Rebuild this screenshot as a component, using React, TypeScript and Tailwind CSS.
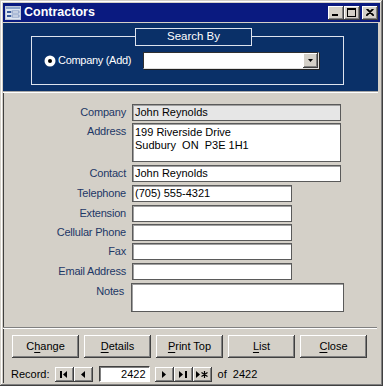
import React from "react";

const raised =
  "bg-[#d4d0c8] shadow-[inset_-1px_-1px_#404040,inset_1px_1px_#ffffff,inset_-2px_-2px_#808080,inset_2px_2px_#d4d0c8]";

function Field({
  label,
  w,
  h = 17,
  mt,
  value,
  grey,
  labelW = 123,
  gap = 6,
}: {
  label: string;
  w: number;
  h?: number;
  mt: number;
  value?: React.ReactNode;
  grey?: boolean;
  labelW?: number;
  gap?: number;
}) {
  return (
    <div className="flex items-start" style={{ marginTop: mt }}>
      <div
        className="text-right text-[11px] leading-[17px] text-[#1d3766] shrink-0 tracking-[-0.2px]"
        style={{ width: labelW, marginRight: gap }}
      >
        {label}
      </div>
      <div
        className={`border border-[#5a5a5a] shadow-[inset_1px_1px_#a0a0a0] text-[11px] leading-[13px] text-black pl-[2px] pt-[1px] ${
          grey ? "bg-[#e6e6e6]" : "bg-white"
        }`}
        style={{ width: w, height: h }}
      >
        {value}
      </div>
    </div>
  );
}

function NavBtn({ children }: { children: React.ReactNode }) {
  return (
    <div className={`${raised} w-[19px] h-[15px] flex items-center justify-center`}>
      {children}
    </div>
  );
}

function Btn({ pre, u, post }: { pre: string; u: string; post: string }) {
  return (
    <div
      className={`${raised} w-[67px] h-[23px] flex items-center justify-center text-[11px] text-black`}
    >
      <span>
        {pre}
        <span className="underline underline-offset-2">{u}</span>
        {post}
      </span>
    </div>
  );
}

export default function App() {
  return (
    <div
      className="w-[383px] h-[386px] bg-[#d4d0c8] p-[3px] shadow-[inset_-1px_-1px_#404040,inset_1px_1px_#d4d0c8,inset_-2px_-2px_#808080,inset_2px_2px_#ffffff] flex flex-col"
      style={{ fontFamily: '"Liberation Sans", Arial, sans-serif' }}
    >
      {/* Title bar */}
      <div className="h-[19px] bg-[#0a1a80] flex items-center pl-[2px] pr-[2px] shrink-0">
        <svg width="16" height="14" viewBox="0 0 16 14" className="shrink-0">
          <rect x="0.5" y="0.5" width="15" height="13" fill="#dfe6f2" stroke="#c0c8d8" />
          <rect x="1" y="1" width="14" height="2" fill="#8fa6cc" />
          <rect x="2" y="5" width="4" height="2" fill="#3a5a9a" />
          <rect x="7" y="5" width="7" height="2" fill="#ffffff" stroke="#3a5a9a" strokeWidth="0.6" />
          <rect x="2" y="9" width="4" height="2" fill="#3a5a9a" />
          <rect x="7" y="9" width="7" height="2" fill="#ffffff" stroke="#3a5a9a" strokeWidth="0.6" />
        </svg>
        <span className="ml-[3px] text-white font-bold text-[12.5px] leading-none">
          Contractors
        </span>
        <div className="ml-auto flex items-center">
          <div className={`${raised} w-[16px] h-[14px] relative`}>
            <div className="absolute left-[4px] top-[8px] w-[6px] h-[2px] bg-black" />
          </div>
          <div className={`${raised} w-[16px] h-[14px] relative`}>
            <div className="absolute left-[3px] top-[2px] w-[9px] h-[9px] border border-black border-t-2" />
          </div>
          <div className={`${raised} w-[16px] h-[14px] ml-[2px] flex items-center justify-center`}>
            <svg width="8" height="7" viewBox="0 0 8 7">
              <path d="M0.5 0 L7.5 7 M1.5 0 L8 6.5 M7.5 0 L0.5 7 M6.5 0 L0 6.5" stroke="black" strokeWidth="1.1" />
            </svg>
          </div>
        </div>
      </div>

      {/* Content */}
      <div className="mt-[1px] flex-1 flex flex-col pr-[2px] shadow-[inset_1px_0_#404040]">
        {/* Header */}
        <div className="h-[69px] bg-[#0a3068] border-b border-[#a8a8a8] pt-[5px] pl-[28px] shrink-0">
          <div className="relative w-[313px] h-[49px] mt-[8px] border border-[#dde3ee]">
            <div className="absolute left-[103px] top-[-9px] w-[117px] h-[18px] bg-[#0a3068] border border-[#dde3ee] flex items-center justify-center text-white text-[11.5px] leading-none">
              Search By
            </div>
            <div className="flex items-center mt-[15px] ml-[12px]">
              <svg width="12" height="12" viewBox="0 0 12 12" className="shrink-0">
                <circle cx="6" cy="6" r="5.5" fill="#ffffff" />
                <circle cx="6" cy="6" r="2" fill="#000000" />
              </svg>
              <span className="ml-[2px] text-white text-[11px] leading-none whitespace-nowrap tracking-[-0.3px]">
                Company (Add)
              </span>
              <div className="ml-[12px] w-[176px] h-[17px] bg-white border border-[#303030] border-b-[#e0e0e0] border-r-[#e0e0e0] shadow-[1px_1px_#202020] flex justify-end">
                <div className={`${raised} w-[15px] h-[15px] flex items-center justify-center`}>
                  <svg width="5" height="3" viewBox="0 0 5 3">
                    <path d="M0 0 H5 L2.5 3 Z" fill="black" />
                  </svg>
                </div>
              </div>
            </div>
          </div>
        </div>

        {/* Body */}
        <div className="flex flex-col border-t border-white">
          <Field label="Company" w={209} mt={11} grey value="John Reynolds" />
          <Field
            label="Address"
            w={209}
            h={39}
            mt={2}
            value={
              <>
                <div className="pt-[1px]">199 Riverside Drive</div>
                <div>Sudbury&nbsp;&nbsp;ON&nbsp;&nbsp;P3E 1H1</div>
              </>
            }
          />
          <Field label="Contact" w={209} mt={3} value="John Reynolds" />
          <Field label="Telephone" w={160} mt={3} value="(705) 555-4321" />
          <Field label="Extension" w={160} mt={3} />
          <Field label="Cellular Phone" w={160} mt={2} />
          <Field label="Fax" w={160} mt={2} />
          <Field label="Email Address" w={160} mt={3} />
          <Field label="Notes" w={213} h={29} mt={3} labelW={121} gap={7} />

          {/* Separator */}
          <div className="mt-[15px] h-[2px] border-t border-[#808080] border-b border-b-white mr-[1px]" />

          {/* Buttons */}
          <div className="flex gap-[5px] ml-[9px] mt-[6px]">
            <Btn pre="C" u="h" post="ange" />
            <Btn pre="" u="D" post="etails" />
            <Btn pre="" u="P" post="rint Top" />
            <Btn pre="" u="L" post="ist" />
            <Btn pre="" u="C" post="lose" />
          </div>

          {/* Record navigator */}
          <div className="flex items-center mt-[8px] ml-[8px] text-[11px] text-black">
            <span className="mr-[5px]">Record:</span>
            <NavBtn>
              <svg width="8" height="7" viewBox="0 0 8 7">
                <rect x="0" y="0" width="2" height="7" fill="black" />
                <path d="M7 0 V7 L3 3.5 Z" fill="black" />
              </svg>
            </NavBtn>
            <NavBtn>
              <svg width="5" height="7" viewBox="0 0 5 7">
                <path d="M4 0 V7 L0 3.5 Z" fill="black" />
              </svg>
            </NavBtn>
            <div className="ml-[6px] w-[51px] h-[16px] bg-white border border-[#404040] border-b-white border-r-white shadow-[inset_1px_1px_#808080] text-right pr-[3px] leading-[14px]">
              2422
            </div>
            <div className="ml-[5px] flex">
              <NavBtn>
                <svg width="5" height="7" viewBox="0 0 5 7">
                  <path d="M0 0 V7 L4 3.5 Z" fill="black" />
                </svg>
              </NavBtn>
              <NavBtn>
                <svg width="8" height="7" viewBox="0 0 8 7">
                  <path d="M0 0 V7 L4 3.5 Z" fill="black" />
                  <rect x="6" y="0" width="2" height="7" fill="black" />
                </svg>
              </NavBtn>
              <NavBtn>
                <svg width="12" height="7" viewBox="0 0 12 7">
                  <path d="M0 0 V7 L4 3.5 Z" fill="black" />
                  <path d="M8.5 0 V7 M5.5 1.5 L11.5 5.5 M11.5 1.5 L5.5 5.5" stroke="black" strokeWidth="1.2" />
                </svg>
              </NavBtn>
            </div>
            <span className="ml-[6px]">of&nbsp;&nbsp;2422</span>
          </div>
        </div>
      </div>
    </div>
  );
}
